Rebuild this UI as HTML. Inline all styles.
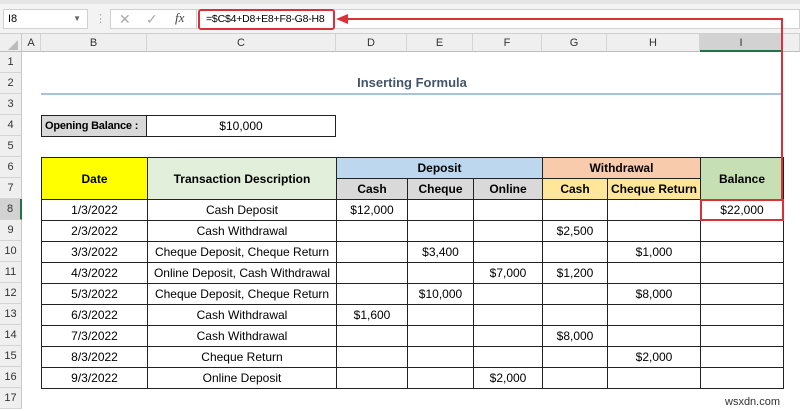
<!DOCTYPE html>
<html><head><style>
*{margin:0;padding:0;box-sizing:border-box}
body{width:800px;height:411px;overflow:hidden;background:#fff;font-family:"Liberation Sans",sans-serif;font-size:12px;color:#000;position:relative}
.a{position:absolute;white-space:nowrap}
.rh{position:absolute;left:0;width:22px;height:21px;background:#efefef;border-bottom:1px solid #d4d4d4;border-right:1px solid #c8c8c8;text-align:center;line-height:21px;font-size:11px;color:#333}
.ch{position:absolute;top:34px;height:18px;background:#efefef;border-right:1px solid #d4d4d4;border-bottom:1px solid #bdbdbd;text-align:center;line-height:18px;font-size:11px;color:#333}
table{border-collapse:collapse;position:absolute;left:41px;top:157px;table-layout:fixed}
td{border:1px solid #222;height:21px;text-align:center;font-size:12px;padding:0;white-space:nowrap;overflow:hidden}
.b{font-weight:bold}
</style></head><body>
<div class="a" style="left:0;top:0;width:800px;height:34px;background:#f3f3f3;border-bottom:1px solid #d0d0d0"></div>
<div class="a" style="left:0;top:0;width:800px;height:4px;background:#e6e6e6"></div>
<div class="a" style="left:3px;top:9px;width:85px;height:20px;background:#fff;border:1px solid #d0d0d0;font-size:11px;line-height:18px;padding-left:4px">I8<span style="position:absolute;right:6px;font-size:8px;color:#666">▼</span></div>
<div class="a" style="left:95px;top:12px;color:#aaa;font-size:11px">⋮</div>
<div class="a" style="left:110px;top:9px;width:88px;height:20px;background:#fff;border:1px solid #d0d0d0"></div>
<div class="a" style="left:119px;top:11px;color:#aaa;font-size:14px">✕</div>
<div class="a" style="left:146px;top:11px;color:#aaa;font-size:14px">✓</div>
<div class="a" style="left:175px;top:10px;color:#444;font-size:13px;font-style:italic;font-family:'Liberation Serif',serif">fx</div>
<div class="a" style="left:196px;top:9px;width:604px;height:20px;background:#fff;border:1px solid #d0d0d0"></div>
<div class="a" style="left:198px;top:9px;width:137px;height:21px;border:2px solid #d9313a;border-radius:3px;font-size:10.5px;line-height:17px;padding-left:6px;letter-spacing:-0.2px">=$C$4+D8+E8+F8-G8-H8</div>
<div class="a" style="left:0;top:34px;width:22px;height:18px;background:#efefef;border-right:1px solid #c8c8c8;border-bottom:1px solid #bdbdbd"></div>
<div class="a" style="left:8px;top:40px;width:0;height:0;border-left:10px solid transparent;border-bottom:10px solid #bbb"></div>
<div class="ch" style="left:22px;width:19px">A</div>
<div class="ch" style="left:41px;width:106px">B</div>
<div class="ch" style="left:147px;width:189px">C</div>
<div class="ch" style="left:336px;width:71px">D</div>
<div class="ch" style="left:407px;width:66px">E</div>
<div class="ch" style="left:473px;width:69px">F</div>
<div class="ch" style="left:542px;width:65px">G</div>
<div class="ch" style="left:607px;width:93px">H</div>
<div class="ch" style="left:700px;width:83px;background:#d2d2d2;border-bottom:2px solid #217346">I</div>
<div class="ch" style="left:783px;width:17px"></div>
<div class="rh" style="top:52px">1</div><div class="rh" style="top:73px">2</div><div class="rh" style="top:94px">3</div><div class="rh" style="top:115px">4</div><div class="rh" style="top:136px">5</div><div class="rh" style="top:157px">6</div><div class="rh" style="top:178px">7</div><div class="rh" style="top:199px;background:#d2d2d2;border-right:2px solid #217346">8</div><div class="rh" style="top:220px">9</div><div class="rh" style="top:241px">10</div><div class="rh" style="top:262px">11</div><div class="rh" style="top:283px">12</div><div class="rh" style="top:304px">13</div><div class="rh" style="top:325px">14</div><div class="rh" style="top:346px">15</div><div class="rh" style="top:367px">16</div><div class="rh" style="top:388px">17</div>
<div class="a b" style="left:41px;top:75px;width:742px;text-align:center;color:#44546a;font-size:13px">Inserting Formula</div>
<div class="a" style="left:41px;top:93px;width:742px;height:2px;background:#a7c2de"></div>
<div class="a b" style="left:41px;top:115px;width:106px;height:22px;background:#d9d9d9;border:1px solid #222;line-height:20px;padding-left:3px;font-size:11px;letter-spacing:-0.2px;overflow:hidden">Opening Balance :</div>
<div class="a" style="left:146px;top:115px;width:190px;height:22px;border:1px solid #222;line-height:20px;text-align:center">$10,000</div>
<table>
<colgroup><col style="width:106px"><col style="width:189px"><col style="width:71px"><col style="width:66px"><col style="width:69px"><col style="width:65px"><col style="width:93px"><col style="width:83px"></colgroup>
<tr><td rowspan="2" class="b" style="background:#ffff00">Date</td><td rowspan="2" class="b" style="background:#e2efda">Transaction Description</td><td colspan="3" class="b" style="background:#bdd7ee">Deposit</td><td colspan="2" class="b" style="background:#f8cbad">Withdrawal</td><td rowspan="2" class="b" style="background:#c6e0b4">Balance</td></tr>
<tr><td class="b" style="background:#d9d9d9">Cash</td><td class="b" style="background:#d9d9d9">Cheque</td><td class="b" style="background:#d9d9d9">Online</td><td class="b" style="background:#ffe699">Cash</td><td class="b" style="background:#ffe699">Cheque Return</td></tr>
<tr><td>1/3/2022</td><td>Cash Deposit</td><td>$12,000</td><td></td><td></td><td></td><td></td><td>$22,000</td></tr>
<tr><td>2/3/2022</td><td>Cash Withdrawal</td><td></td><td></td><td></td><td>$2,500</td><td></td><td></td></tr>
<tr><td>3/3/2022</td><td>Cheque Deposit, Cheque Return</td><td></td><td>$3,400</td><td></td><td></td><td>$1,000</td><td></td></tr>
<tr><td>4/3/2022</td><td>Online Deposit, Cash Withdrawal</td><td></td><td></td><td>$7,000</td><td>$1,200</td><td></td><td></td></tr>
<tr><td>5/3/2022</td><td>Cheque Deposit, Cheque Return</td><td></td><td>$10,000</td><td></td><td></td><td>$8,000</td><td></td></tr>
<tr><td>6/3/2022</td><td>Cash Withdrawal</td><td>$1,600</td><td></td><td></td><td></td><td></td><td></td></tr>
<tr><td>7/3/2022</td><td>Cash Withdrawal</td><td></td><td></td><td></td><td>$8,000</td><td></td><td></td></tr>
<tr><td>8/3/2022</td><td>Cheque Return</td><td></td><td></td><td></td><td></td><td>$2,000</td><td></td></tr>
<tr><td>9/3/2022</td><td>Online Deposit</td><td></td><td></td><td>$2,000</td><td></td><td></td><td></td></tr>
</table>
<div class="a" style="left:700px;top:199px;width:84px;height:22px;border:2px solid #d9313a"></div>
<div class="a" style="left:345px;top:18px;width:437px;height:2px;background:#d9313a"></div>
<div class="a" style="left:781px;top:18px;width:2px;height:182px;background:#d9313a"></div>
<div class="a" style="left:336px;top:14px;width:0;height:0;border-top:5px solid transparent;border-bottom:5px solid transparent;border-right:12px solid #d9313a"></div>
<div class="a" style="left:725px;top:396px;font-size:11px;color:#333">wsxdn.com</div>
</body></html>
